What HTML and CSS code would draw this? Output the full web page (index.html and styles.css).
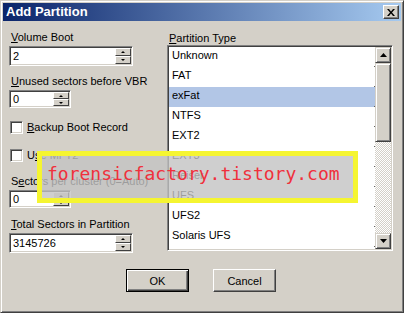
FILE: index.html
```html
<!DOCTYPE html>
<html>
<head>
<meta charset="utf-8">
<link rel="stylesheet" href="styles.css">
</head>
<body>
<div class="window">
  <div class="titlebar">
    <span class="title">Add Partition</span>
    <span class="close"><svg width="8" height="7" viewBox="0 0 8 7"><path d="M0 0h2l2 2.5 2-2.5h2l-3 3.5 3 3.5h-2l-2-2.5-2 2.5h-2l3-3.5z" fill="#000"/></svg></span>
  </div>
  <div class="body">
    <div class="main">
      <div class="left">
        <div class="lbl"><u>V</u>olume Boot</div>
        <div class="spin wide"><span class="val">2</span><span class="btns"><span class="sb"><i class="up"></i></span><span class="sb"><i class="dn"></i></span></span></div>
        <div class="lbl gap9"><u>U</u>nused sectors before VBR</div>
        <div class="spin narrow"><span class="val">0</span><span class="btns"><span class="sb"><i class="up"></i></span><span class="sb"><i class="dn"></i></span></span></div>
        <div class="check c1"><span class="box"></span><span><u>B</u>ackup Boot Record</span></div>
        <div class="check c2"><span class="box"></span><span>U<u>s</u>e MFT2</span></div>
        <div class="lbl gap13">S<u>e</u>ctors per cluster (0=Auto)</div>
        <div class="spin narrow"><span class="val">0</span><span class="btns"><span class="sb"><i class="up"></i></span><span class="sb"><i class="dn"></i></span></span></div>
        <div class="lbl gap10"><u>T</u>otal Sectors in Partition</div>
        <div class="spin wide"><span class="val">3145726</span><span class="btns"><span class="sb"><i class="up"></i></span><span class="sb"><i class="dn"></i></span></span></div>
      </div>
      <div class="right">
        <div class="lbl"><u>P</u>artition Type</div>
        <div class="list">
          <div class="items">
            <div class="item">Unknown</div>
            <div class="item">FAT</div>
            <div class="item sel">exFat</div>
            <div class="item">NTFS</div>
            <div class="item">EXT2</div>
            <div class="item">EXT3</div>
            <div class="item">Reiser</div>
            <div class="item">UFS</div>
            <div class="item">UFS2</div>
            <div class="item">Solaris UFS</div>
          </div>
          <div class="scroll">
            <div class="sbtn"><svg width="7" height="4" viewBox="0 0 7 4"><path d="M3.5 0L7 4H0z" fill="#000"/></svg></div>
            <div class="thumb"></div>
            <div class="track"></div>
            <div class="sbtn"><svg width="7" height="4" viewBox="0 0 7 4"><path d="M0 0h7L3.5 4z" fill="#000"/></svg></div>
          </div>
        </div>
      </div>
    </div>
    <div class="actions">
      <button class="btn default">OK</button>
      <button class="btn">Cancel</button>
    </div>
  </div>
  <div class="wm">forensicfactory.tistory.com</div>
</div>
</body>
</html>
```
FILE: styles.css
```css
* { box-sizing: border-box; }
html, body { margin: 0; padding: 0; }
body {
  width: 404px;
  height: 313px;
  overflow: hidden;
  background: #d4d0c8;
  font-family: "Liberation Sans", Arial, sans-serif;
  font-size: 11px;
  color: #000;
}
.window {
  position: relative;
  width: 404px;
  height: 313px;
  background: #d4d0c8;
  border: 1px solid;
  border-color: #d4d0c8 #404040 #404040 #d4d0c8;
  box-shadow: inset 1px 1px #fff, inset -1px -1px #808080;
  padding: 2px;
  display: flex;
  flex-direction: column;
}
.titlebar {
  height: 18px;
  flex: none;
  background: linear-gradient(to right, #0a246a, #a6caf0);
  display: flex;
  align-items: center;
  justify-content: space-between;
  padding: 0 2px 0 3px;
}
.title {
  color: #fff;
  font-weight: bold;
  font-size: 13px;
  line-height: 18px;
}
.close {
  width: 16px;
  height: 14px;
  background: #d4d0c8;
  border: 1px solid;
  border-color: #fff #404040 #404040 #fff;
  box-shadow: inset -1px -1px #808080;
  display: flex;
  align-items: center;
  justify-content: center;
  padding-right: 1px;
}
.body {
  flex: 1;
  padding: 10px 8px 0 6px;
  display: flex;
  flex-direction: column;
}
.main {
  display: flex;
  gap: 34px;
}
.left {
  width: 124px;
  display: flex;
  flex-direction: column;
}
.right {
  width: 226px;
  display: flex;
  flex-direction: column;
  padding-top: 1px;
}
.lbl {
  line-height: 13px;
  padding-left: 2px;
  white-space: nowrap;
}
.gap9 { margin-top: 9px; }
.gap13 { margin-top: 13px; }
.gap10 { margin-top: 10px; }
.spin {
  margin-top: 2px;
  display: flex;
  background: #fff;
  border: 1px solid;
  border-color: #808080 #fff #fff #808080;
  box-shadow: inset 1px 1px #404040, inset -1px -1px #d4d0c8;
  padding: 1px;
}
.spin.wide { width: 124px; height: 20px; }
.spin.narrow { width: 62px; height: 18px; }
.val {
  flex: 1;
  padding-left: 2px;
  display: flex;
  align-items: center;
}
.btns {
  width: 16px;
  display: flex;
  flex-direction: column;
}
.sb {
  flex: 1;
  background: #d4d0c8;
  border: 1px solid;
  border-color: #fff #404040 #404040 #fff;
  display: flex;
  align-items: center;
  justify-content: center;
}
.sb i {
  width: 0;
  height: 0;
  border-left: 2px solid transparent;
  border-right: 2px solid transparent;
}
.sb i.up { border-bottom: 2px solid #000; }
.sb i.dn { border-top: 2px solid #000; }
.check {
  display: flex;
  align-items: center;
  gap: 4px;
  margin-left: 1px;
  height: 13px;
  line-height: 13px;
  white-space: nowrap;
}
.c1 { margin-top: 13px; }
.c2 { margin-top: 15px; }
.box {
  width: 13px;
  height: 13px;
  flex: none;
  background: #fff;
  border: 1px solid;
  border-color: #808080 #fff #fff #808080;
  box-shadow: inset 1px 1px #404040, inset -1px -1px #d4d0c8;
}
.list {
  height: 206px;
  display: flex;
  background: #fff;
  border: 1px solid;
  border-color: #808080 #fff #fff #808080;
  box-shadow: inset 1px 1px #404040, inset -1px -1px #d4d0c8;
  padding: 1px;
}
.items {
  flex: 1;
  overflow: hidden;
}
.item {
  position: relative;
  height: 20px;
  line-height: 17px;
  padding-left: 3px;
  color: #000;
}
.item::after {
  content: "";
  position: absolute;
  right: 0;
  bottom: 0;
  width: 1px;
  height: 1px;
  background: #606060;
}
.item.sel { background: #b2c6e6; }
.scroll {
  width: 16px;
  display: flex;
  flex-direction: column;
}
.sbtn, .thumb {
  background: #d4d0c8;
  border: 1px solid;
  border-color: #d4d0c8 #404040 #404040 #d4d0c8;
  box-shadow: inset 1px 1px #fff, inset -1px -1px #808080;
}
.sbtn {
  height: 16px;
  display: flex;
  align-items: center;
  justify-content: center;
}
.thumb { height: 79px; }
.track {
  flex: 1;
  background-image: conic-gradient(#fff 0 25%, #d4d0c8 0 50%, #fff 0 75%, #d4d0c8 0);
  background-size: 2px 2px;
}
.actions {
  display: flex;
  justify-content: center;
  gap: 24px;
  margin-top: 16px;
}
.btn {
  width: 63px;
  height: 23px;
  padding: 0;
  font-family: "Liberation Sans", Arial, sans-serif;
  font-size: 11px;
  color: #000;
  background: #d4d0c8;
  border: 1px solid;
  border-color: #fff #404040 #404040 #fff;
  box-shadow: inset -1px -1px #808080;
}
.btn.default {
  border-color: #000;
  box-shadow: inset 1px 1px #fff, inset -1px -1px #404040, inset -2px -2px #808080;
}
.wm {
  position: absolute;
  left: 36px;
  top: 150px;
  width: 321px;
  height: 52px;
  border: 5px solid #f5f531;
  background: rgba(195, 195, 195, 0.8);
  color: #f0303c;
  font-family: "DejaVu Sans Mono", monospace;
  font-size: 18px;
  line-height: 36px;
  padding-left: 5px;
  white-space: nowrap;
}
```
